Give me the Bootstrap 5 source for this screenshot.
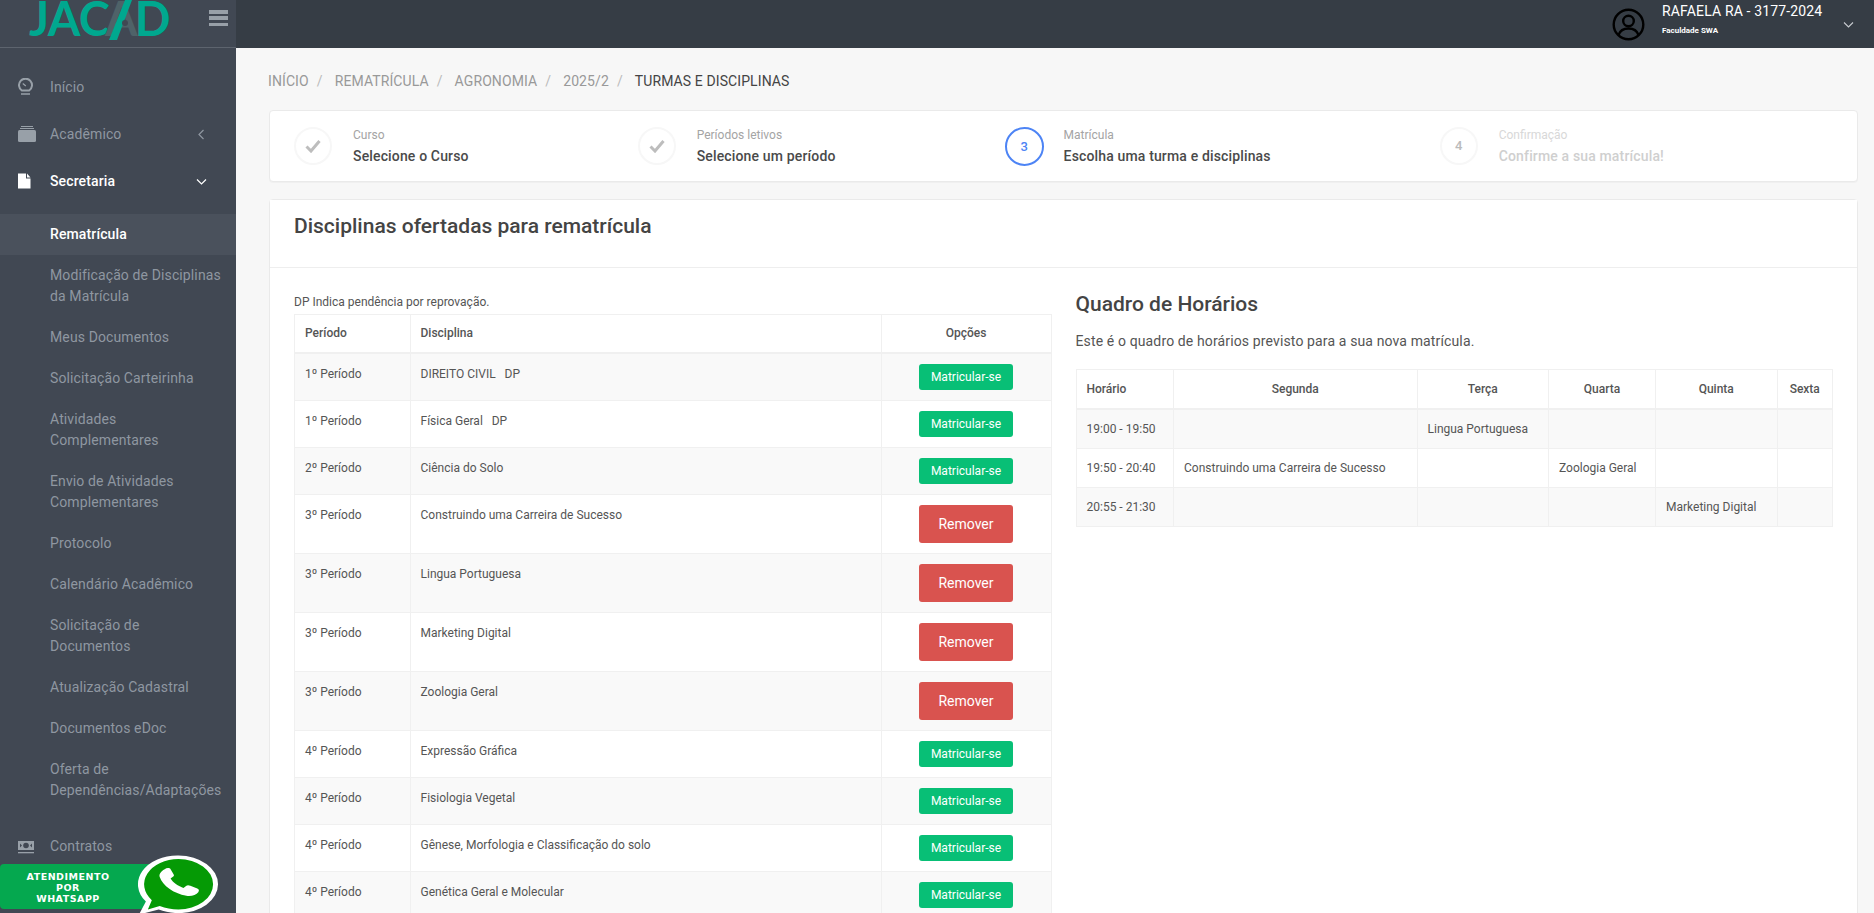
<!DOCTYPE html>
<html lang="pt-BR">
<head>
<meta charset="utf-8">
<title>Turmas e disciplinas</title>
<link href="https://cdn.jsdelivr.net/npm/bootstrap@5.3.0/dist/css/bootstrap.min.css" rel="stylesheet">
<style>
html,body{height:100%;overflow:hidden}
body{font-family:Roboto,"Liberation Sans",sans-serif;font-size:14px;color:#555;background:#f7f7f7}
.app-shell{height:913px;overflow:hidden}
.side{width:236px;flex:0 0 236px;background:#414853;position:relative;overflow:hidden}
.side-top{height:48px;border-bottom:1px solid #5d646e;position:relative;overflow:hidden}
.logo-word{position:absolute;left:29px;top:-12px;font-family:Lato,"Liberation Sans",sans-serif;font-size:47px;font-weight:700;line-height:60px;color:#00a88f;white-space:nowrap;letter-spacing:-.8px}
.logo-dark{color:#4f6268;margin-left:-4px}
.logo-d{margin-left:-2px}
.logo-slash{position:absolute;left:108px;top:0;width:24px;height:40px}
.burger{position:absolute;left:209px;top:10px;width:19px;height:16px;display:flex;flex-direction:column;justify-content:space-between}
.burger i{display:block;height:3.5px;background:#98a0a8}
.side-nav{list-style:none;margin:0;padding:15.5px 0 0;letter-spacing:.12px}
.main-link{height:47px;display:flex;align-items:center;padding:0 0 0 18px;color:#8f97a1;text-decoration:none;position:relative}
.main-link svg.ic{width:18px;height:18px;margin-right:14px;flex:none}
.main-link.open{color:#fff;font-weight:500}
.caret-ic{position:absolute;left:196px;top:18px;width:11px;height:11px}
.sub-nav{list-style:none;margin:9.5px 0 12px;padding:0}
.sub-link{display:block;padding:10px 13px 10px 50px;line-height:21px;color:#8f97a1;text-decoration:none}
.sub-link.on{background:#4a515c;color:#fff;font-weight:500}
.wa-banner{position:absolute;left:0;top:864px;width:160px;height:45px;background:#05a84f;border-radius:4px;color:#fff;font-family:"DejaVu Sans",sans-serif;font-weight:700;font-size:9.5px;line-height:11px;letter-spacing:.5px;text-align:center;padding:7px 24px 0 0}
.wa-logo{position:absolute;left:136px;top:854px;width:85px;height:62px}
.page{min-width:0}
.topline{height:48px;background:#363d45;color:#fff;position:relative}
.user-ic{width:33px;height:33px;flex:none}
.user-box{margin-left:17px;width:181px;align-self:flex-start;padding-top:3px}
.user-name{font-size:14px;line-height:16px;letter-spacing:.15px}
.user-org{font-size:8px;line-height:10px;font-weight:700;margin-top:7px}
.user-caret{width:11px;height:11px;margin-right:20px}
.content-pad{padding:0 16px 0 33px}
.crumbs{--bs-breadcrumb-divider-color:#bbb;--bs-breadcrumb-item-active-color:#444;height:62px;margin:0 0 0 -1px;padding-top:5px;align-items:center;font-size:14px;letter-spacing:.1px;text-transform:uppercase}
.crumbs .breadcrumb-item+.breadcrumb-item::before{padding-right:12px}
.crumbs a{color:#999;text-decoration:none}
.panel{border:1px solid #eaeaea;border-radius:4px;background:#fff;box-shadow:0 1px 1px rgba(0,0,0,.03)}
.step-panel{height:72px;margin-bottom:17px;padding:16px 24px 0}
.step-item{flex:1 1 auto}
.step-dot{width:38px;height:38px;border:2px solid #f7f7f7;border-radius:50%;display:flex;align-items:center;justify-content:center;font-weight:500;font-size:13px;color:#bbb;margin-right:21px;flex:none}
.step-dot svg{width:16px;height:14px}
.step-dot.now{border-color:#4d84f5;color:#4d84f5;font-size:13px;margin-right:20px;width:39px;height:39px}
.step-label{font-size:12px;line-height:16px;color:#a4a4a4}
.step-title{font-size:14px;line-height:20px;font-weight:500;color:#4a4a4a;margin-top:2.500px;letter-spacing:.15px}
.step-item.later .step-label{color:#d8d8d8}
.step-item.later .step-title{color:#cfcfcf}
.panel-head{height:68px;border-bottom:1px solid #eee;padding:13px 24px 0;background:#fff}
.panel-title{font-size:21px;line-height:26px;font-weight:500;color:#444;margin:0}
.panel-body{padding:24px 24px 0}
.note{font-size:12px;line-height:14px;color:#555;margin:3px 0 5px}
.grid-tb{--bs-table-color:#555;--bs-table-border-color:#f0f0f0;--bs-table-striped-bg:#f9f9f9;--bs-table-striped-color:#555;font-size:12px;line-height:21px;margin:0;table-layout:fixed;border-color:#f0f0f0}
.grid-tb th{font-weight:500;color:#555;padding:8px 10px;border-bottom:2px solid #f0f0f0}
.grid-tb td{padding:10px;vertical-align:top}
.grid-tb>tbody>tr>td{border-top:0}
.act{width:94px;border:0;border-radius:3px;color:#fff;display:block;margin:0 auto;padding:0}
.act-go{height:26px;font-size:12px;line-height:26px;background:#08bf76}
.act-go:hover{background:#08bf76;color:#fff}
.act-del{height:38px;font-size:14px;line-height:38px;background:#d9534f}
.act-del:hover{background:#d9534f;color:#fff}
.sched-title{font-size:21px;line-height:26px;font-weight:500;color:#444;margin:-1px 0 14px}
.sched-text{font-size:14px;line-height:20px;color:#555;margin:0 0 18px;letter-spacing:.13px}
.sched td,.sched th{padding:8.500px 10px}
.sched td{vertical-align:middle}
</style>
</head>
<body>
<div class="app-shell d-flex">
  <aside class="side">
    <div class="side-top">
      <div class="logo-word">JAC<span class="logo-dark">A</span><span class="logo-d">D</span></div>
      <svg class="logo-slash" viewBox="0 0 24 40"><polygon points="17,0 24,0 9,40 1,40" fill="#00a88f"/><circle cx="17" cy="23" r="3" fill="#414853"/></svg>
      <div class="burger"><i></i><i></i><i></i></div>
    </div>
    <ul class="side-nav">
      <li><a class="main-link" href="#"><svg class="ic" viewBox="0 0 18 18" fill="none" stroke="#98a0a8" stroke-width="2"><path d="M3.800 12.500A6.500 6.500 0 1 1 11.200 12.500Z"/><path d="M3 16h9" stroke-width="1.500"/><path d="M4.800 5.500l3 2.500" stroke-width="1.300"/></svg>Início</a></li>
      <li><a class="main-link" href="#"><svg class="ic" viewBox="0 0 18 18" fill="#98a0a8"><rect x="0" y="5" width="18" height="12" rx="1.500"/><rect x="2" y="3" width="14" height="1"/><rect x="3" y="1" width="12" height="1"/></svg>Acadêmico<svg class="caret-ic" viewBox="0 0 11 11" fill="none" stroke="#8f97a1" stroke-width="1.200"><path d="M7.500 1L3 5.500 7.500 10"/></svg></a></li>
      <li><a class="main-link open" href="#"><svg class="ic" viewBox="0 0 18 18" fill="#fff"><path d="M0 1.500h8v5h4.500V16.500H0z M9 1.500l3.500 4H9z"/></svg>Secretaria<svg class="caret-ic" viewBox="0 0 11 11" fill="none" stroke="#fff" stroke-width="1.200"><path d="M1 3.500L5.500 8 10 3.500"/></svg></a>
        <ul class="sub-nav">
          <li><a class="sub-link on" href="#">Rematrícula</a></li>
          <li><a class="sub-link" href="#">Modificação de Disciplinas da Matrícula</a></li>
          <li><a class="sub-link" href="#">Meus Documentos</a></li>
          <li><a class="sub-link" href="#">Solicitação Carteirinha</a></li>
          <li><a class="sub-link" href="#">Atividades Complementares</a></li>
          <li><a class="sub-link" href="#">Envio de Atividades Complementares</a></li>
          <li><a class="sub-link" href="#">Protocolo</a></li>
          <li><a class="sub-link" href="#">Calendário Acadêmico</a></li>
          <li><a class="sub-link" href="#">Solicitação de Documentos</a></li>
          <li><a class="sub-link" href="#">Atualização Cadastral</a></li>
          <li><a class="sub-link" href="#">Documentos eDoc</a></li>
          <li><a class="sub-link" href="#">Oferta de Dependências/Adaptações</a></li>
        </ul>
      </li>
      <li><a class="main-link" href="#"><svg class="ic" viewBox="0 0 18 18"><rect x="0" y="3" width="16" height="9" fill="#98a0a8"/><circle cx="8" cy="7.500" r="2.800" fill="#414853"/><path d="M2 5.500L4 7.500 2 9.500zM14 5.500L12 7.500 14 9.500z" fill="#414853"/><rect x="0" y="14" width="16" height="1.300" fill="#98a0a8"/></svg>Contratos</a></li>
    </ul>
    <div class="wa-banner">ATENDIMENTO<br>POR<br>WHATSAPP</div>
    <svg class="wa-logo" viewBox="0 0 86 86" preserveAspectRatio="none">
      <path d="M43 2a40 40 0 0 1 0 80c-7 0-14-2-20-5L3 84l7-18A40 40 0 0 1 43 2z" fill="#fff"/>
      <path d="M43 7a35 35 0 0 1 0 70c-7 0-13-2-19-5L12 77l4-13A35 35 0 0 1 43 7z" fill="#059a05"/>
      <path d="M29 21c2-2 5-2 6 0l3 7c1 2 0 3-1 4l-2 2c2 5 7 10 13 13l3-3c1-1 2-1 4 0l7 4c2 1 2 3 1 5-2 4-7 6-12 5-13-3-24-14-27-26-1-4 1-8 5-11z" fill="#fff"/>
    </svg>
  </aside>
  <div class="page flex-grow-1">
    <header class="topline d-flex align-items-center justify-content-end">
      <svg class="user-ic" viewBox="0 0 33 33" fill="none" stroke="#000" stroke-width="2.400"><circle cx="16.500" cy="16.500" r="14.800"/><circle cx="16.500" cy="13" r="5.300"/><path d="M6.500 27c1.500-4.500 5-6.500 10-6.500s8.500 2 10 6.500"/></svg>
      <div class="user-box"><div class="user-name">RAFAELA RA - 3177-2024</div><div class="user-org">Faculdade SWA</div></div>
      <svg class="user-caret" viewBox="0 0 11 11" fill="none" stroke="#c8ccd0" stroke-width="1.100"><path d="M1 3.500L5.500 8 10 3.500"/></svg>
    </header>
    <main class="content-pad">
      <ol class="breadcrumb crumbs">
        <li class="breadcrumb-item"><a href="#">Início</a></li>
        <li class="breadcrumb-item"><a href="#">Rematrícula</a></li>
        <li class="breadcrumb-item"><a href="#">Agronomia</a></li>
        <li class="breadcrumb-item"><a href="#">2025/2</a></li>
        <li class="breadcrumb-item active">Turmas e Disciplinas</li>
      </ol>
      <section class="panel step-panel d-flex">
        <div class="step-item d-flex"><div class="step-dot"><svg viewBox="0 0 16 14" fill="none" stroke="#bdbdbd" stroke-width="3"><path d="M1.500 7.500L6 12 14.500 2"/></svg></div><div><div class="step-label">Curso</div><div class="step-title">Selecione o Curso</div></div></div>
        <div class="step-item d-flex"><div class="step-dot"><svg viewBox="0 0 16 14" fill="none" stroke="#bdbdbd" stroke-width="3"><path d="M1.500 7.500L6 12 14.500 2"/></svg></div><div><div class="step-label">Períodos letivos</div><div class="step-title">Selecione um período</div></div></div>
        <div class="step-item d-flex"><div class="step-dot now">3</div><div><div class="step-label">Matrícula</div><div class="step-title">Escolha uma turma e disciplinas</div></div></div>
        <div class="step-item later d-flex"><div class="step-dot">4</div><div><div class="step-label">Confirmação</div><div class="step-title">Confirme a sua matrícula!</div></div></div>
      </section>
      <section class="panel">
        <div class="panel-head"><h2 class="panel-title">Disciplinas ofertadas para rematrícula</h2></div>
        <div class="panel-body">
          <div class="row gx-4">
            <div class="col-6">
              <p class="note">DP Indica pendência por reprovação.</p>
              <table class="table table-bordered table-striped grid-tb">
                <colgroup><col style="width:115.500px"><col><col style="width:170px"></colgroup>
                <thead><tr><th>Período</th><th>Disciplina</th><th class="text-center">Opções</th></tr></thead>
                <tbody>
                  <tr><td>1º Período</td><td>DIREITO CIVIL &nbsp; DP</td><td><button class="btn act act-go">Matricular-se</button></td></tr>
                  <tr><td>1º Período</td><td>Física Geral &nbsp; DP</td><td><button class="btn act act-go">Matricular-se</button></td></tr>
                  <tr><td>2º Período</td><td>Ciência do Solo</td><td><button class="btn act act-go">Matricular-se</button></td></tr>
                  <tr><td>3º Período</td><td>Construindo uma Carreira de Sucesso</td><td><button class="btn act act-del">Remover</button></td></tr>
                  <tr><td>3º Período</td><td>Lingua Portuguesa</td><td><button class="btn act act-del">Remover</button></td></tr>
                  <tr><td>3º Período</td><td>Marketing Digital</td><td><button class="btn act act-del">Remover</button></td></tr>
                  <tr><td>3º Período</td><td>Zoologia Geral</td><td><button class="btn act act-del">Remover</button></td></tr>
                  <tr><td>4º Período</td><td>Expressão Gráfica</td><td><button class="btn act act-go">Matricular-se</button></td></tr>
                  <tr><td>4º Período</td><td>Fisiologia Vegetal</td><td><button class="btn act act-go">Matricular-se</button></td></tr>
                  <tr><td>4º Período</td><td>Gênese, Morfologia e Classificação do solo</td><td><button class="btn act act-go">Matricular-se</button></td></tr>
                  <tr><td>4º Período</td><td>Genética Geral e Molecular</td><td><button class="btn act act-go">Matricular-se</button></td></tr>
                </tbody>
              </table>
            </div>
            <div class="col-6">
              <h3 class="sched-title">Quadro de Horários</h3>
              <p class="sched-text">Este é o quadro de horários previsto para a sua nova matrícula.</p>
              <table class="table table-bordered table-striped grid-tb sched">
                <colgroup><col style="width:97.500px"><col style="width:243.500px"><col style="width:131.500px"><col style="width:107px"><col style="width:121.500px"><col></colgroup>
                <thead><tr><th>Horário</th><th class="text-center">Segunda</th><th class="text-center">Terça</th><th class="text-center">Quarta</th><th class="text-center">Quinta</th><th class="text-center">Sexta</th></tr></thead>
                <tbody>
                  <tr><td>19:00 - 19:50</td><td></td><td>Lingua Portuguesa</td><td></td><td></td><td></td></tr>
                  <tr><td>19:50 - 20:40</td><td>Construindo uma Carreira de Sucesso</td><td></td><td>Zoologia Geral</td><td></td><td></td></tr>
                  <tr><td>20:55 - 21:30</td><td></td><td></td><td></td><td>Marketing Digital</td><td></td></tr>
                </tbody>
              </table>
            </div>
          </div>
        </div>
      </section>
    </main>
  </div>
</div>
<script src="https://cdn.jsdelivr.net/npm/bootstrap@5.3.0/dist/js/bootstrap.bundle.min.js"></script>
</body>
</html>
